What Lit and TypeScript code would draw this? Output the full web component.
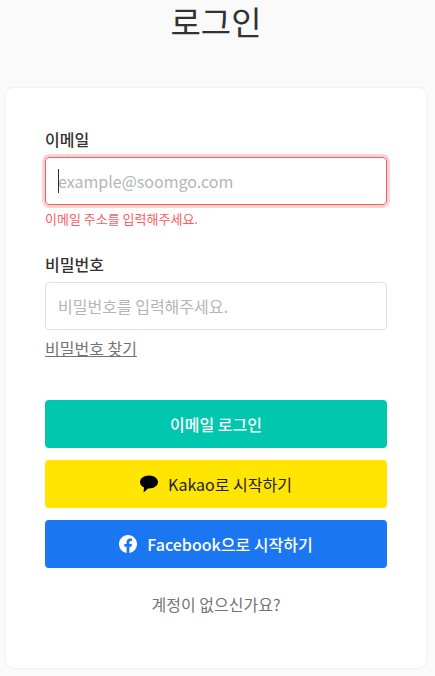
import { LitElement, html, css } from "lit";
import { customElement } from "lit/decorators.js";

@customElement("app-root")
export class AppRoot extends LitElement {
  static styles = css`
    :host {
      display: block;
      height: 676px;
      overflow: hidden;
      background: #fafafa;
      font-family: "Noto Sans CJK KR", "Noto Sans", sans-serif;
      color: #323232;
    }
    .page {
      display: flex;
      flex-direction: column;
      padding: 0 8px 0 5px;
    }
    h1 {
      margin: 0;
      height: 87px;
      font-size: 33px;
      font-weight: 400;
      line-height: 42px;
      text-align: center;
      color: #323232;
      box-sizing: border-box;
    }
    .card {
      box-sizing: border-box;
      height: 582px;
      padding: 39px;
      background: #fff;
      border: 1px solid #f2f2f2;
      border-radius: 8px;
      display: flex;
      flex-direction: column;
    }
    label {
      display: block;
      height: 30px;
      font-size: 16px;
      font-weight: 500;
      line-height: 24px;
      color: #323232;
    }
    .input {
      position: relative;
      box-sizing: border-box;
      height: 48px;
      border: 1px solid #e1e1e1;
      border-radius: 4px;
      display: flex;
      align-items: center;
      padding: 0 12px;
    }
    .input input {
      flex: 1;
      min-width: 0;
      border: 0;
      outline: 0;
      padding: 0;
      font: inherit;
      font-size: 16px;
      color: #323232;
      background: transparent;
    }
    .input input::placeholder {
      color: #b5b5b5;
      opacity: 1;
    }
    .input.error {
      border-color: #fa5c5f;
      box-shadow: 0 0 0 3px #ffd3d4;
    }
    .caret {
      position: absolute;
      left: 12px;
      top: 11px;
      width: 1px;
      height: 24px;
      background: #323232;
    }
    .err {
      height: 47px;
      font-size: 13px;
      line-height: 28px;
      color: #fa5c5f;
    }
    .find {
      align-self: flex-start;
      margin-top: 6px;
      height: 64px;
      font-size: 16px;
      line-height: 24px;
      color: #737373;
    }
    .find a {
      color: inherit;
      text-decoration: underline;
    }
    .btns {
      display: flex;
      flex-direction: column;
      gap: 12px;
    }
    button {
      height: 48px;
      border: 0;
      border-radius: 4px;
      font: inherit;
      font-size: 16px;
      display: flex;
      align-items: center;
      justify-content: center;
      gap: 10px;
      padding: 0;
    }
    .email { background: #00c7ae; color: #fff; font-weight: 500; }
    .kakao { background: #ffe500; color: #222; }
    .fb { background: #1b76f2; color: #fff; font-weight: 500; }
    svg { display: block; flex: none; }
    .signup {
      margin-top: 24px;
      text-align: center;
      font-size: 16px;
      line-height: 24px;
      color: #737373;
    }
  `;

  render() {
    return html`
      <div class="page">
        <h1>로그인</h1>
        <div class="card">
          <label>이메일</label>
          <div class="input error">
            <input type="text" placeholder="example@soomgo.com" />
            <span class="caret"></span>
          </div>
          <div class="err">이메일 주소를 입력해주세요.</div>
          <label>비밀번호</label>
          <div class="input">
            <input type="text" placeholder="비밀번호를 입력해주세요." />
          </div>
          <div class="find"><a href="#">비밀번호 찾기</a></div>
          <div class="btns">
            <button class="email">이메일 로그인</button>
            <button class="kakao">
              <svg width="18" height="18" viewBox="0 0 18 18">
                <path fill="#000" d="M9 .6C4 .6 0 3.5 0 7.1c0 2.3 1.6 4.3 4 5.5L3.6 17.6 8 13.6h1c5 0 9-2.9 9-6.5S14 .6 9 .6z"/>
              </svg>
              <span>Kakao로 시작하기</span>
            </button>
            <button class="fb">
              <svg width="18" height="18" viewBox="0 0 18 18">
                <path fill="#fff" d="M18 9.05C18 4.05 13.97 0 9 0S0 4.05 0 9.05c0 4.52 3.29 8.27 7.59 8.95v-6.33H5.31V9.05h2.28V7.06c0-2.27 1.34-3.52 3.4-3.52.99 0 2.02.18 2.02.18v2.22h-1.14c-1.12 0-1.47.7-1.47 1.41v1.7h2.5l-.4 2.62h-2.1V18C14.71 17.32 18 13.57 18 9.05z"/>
              </svg>
              <span>Facebook으로 시작하기</span>
            </button>
          </div>
          <div class="signup">계정이 없으신가요?</div>
        </div>
      </div>
    `;
  }
}
